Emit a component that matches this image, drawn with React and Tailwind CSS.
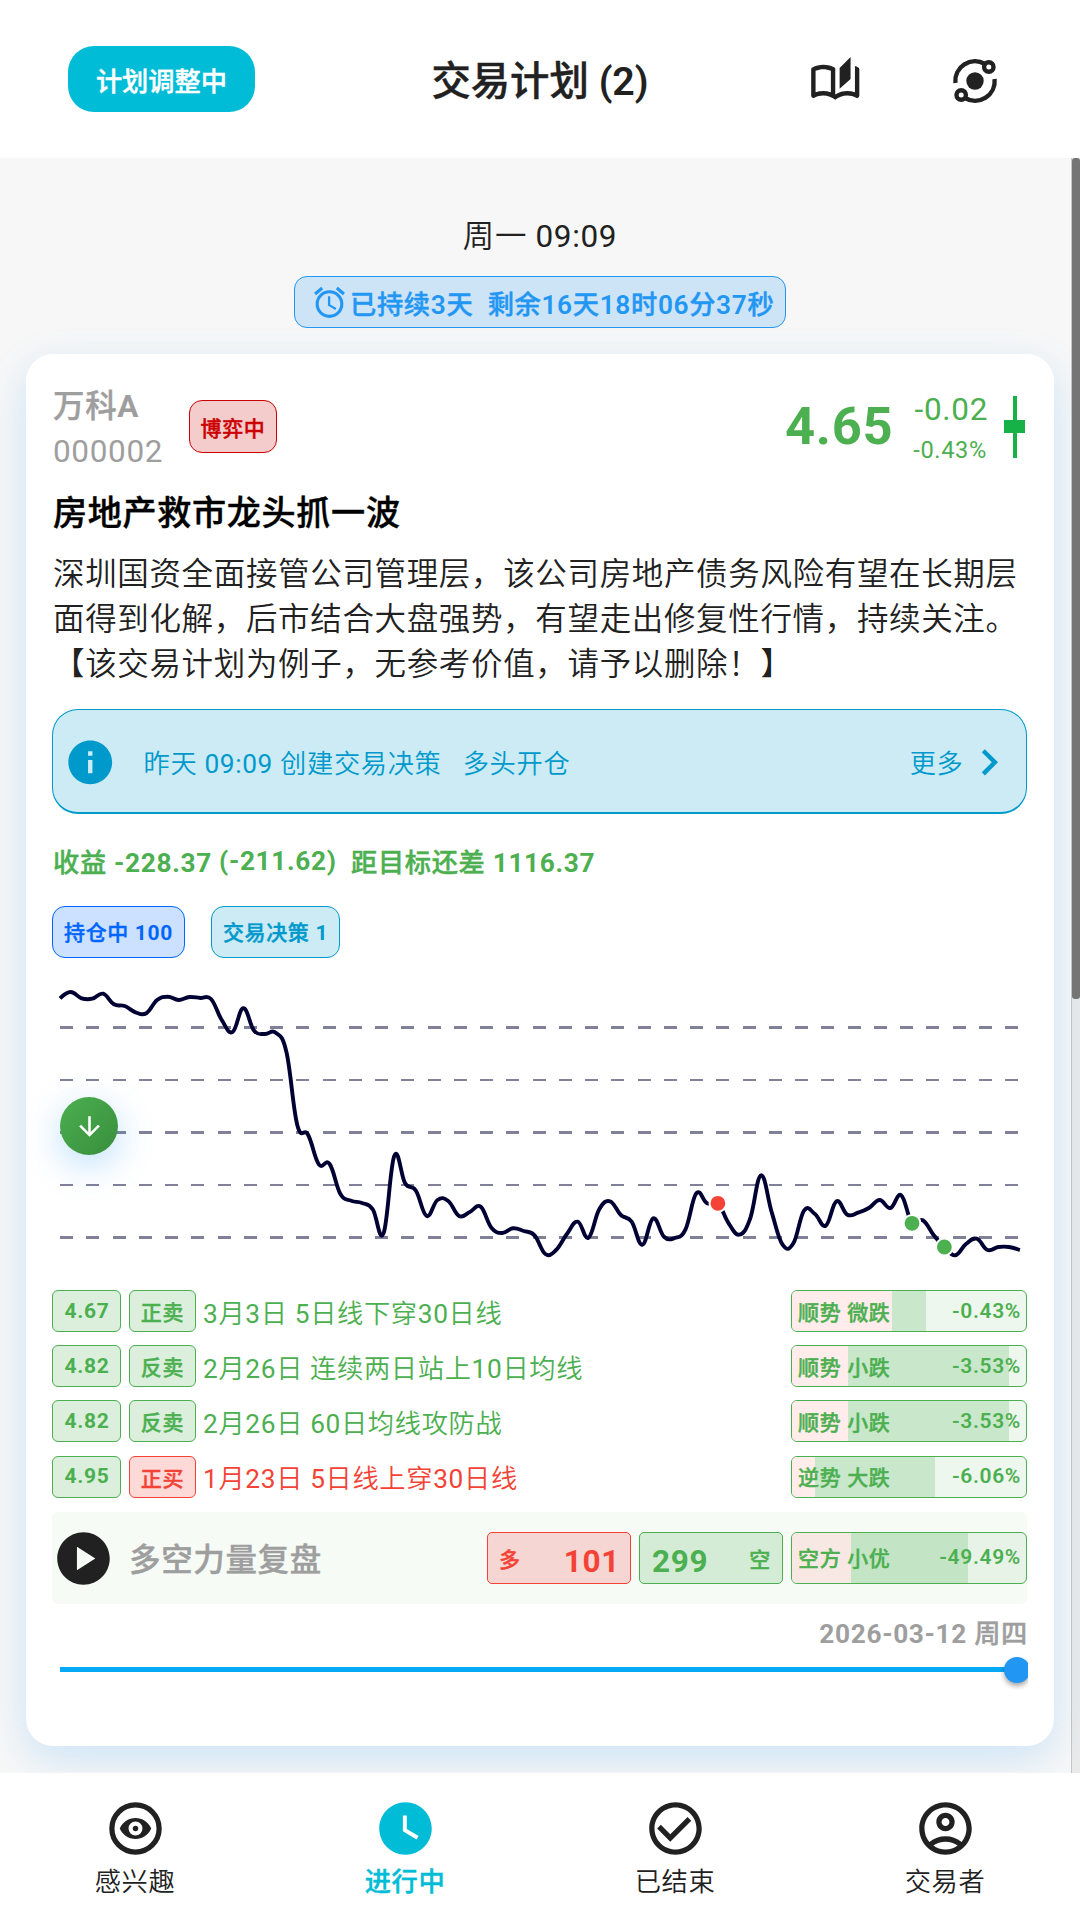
import React from "react";
import {
  MdAccessAlarm,
  MdArrowDownward,
  MdCheckCircleOutline,
  MdChevronRight,
  MdInfo,
  MdOutlineAccountCircle,
  MdOutlineAutoStories,
  MdPlayCircle,
  MdWatchLater,
} from "react-icons/md";

/* Price curve, one value per trading day, in chart units (top = 0). */
const SERIES = [
  28.3, 22, 28.3, 28.7, 23.7, 34.3, 36, 42.3, 43.3, 30, 26.7, 30, 27, 28, 29, 50, 62, 38.3, 60.7, 64, 62.7,
  82.3, 155, 164.7, 194.3, 194, 224, 230.7, 233, 239.3, 263.3, 185.7, 213.3, 220.7, 246, 230, 231, 246, 242,
  236.7, 257.7, 263, 258.3, 261, 265.3, 284, 280, 264, 251.7, 267.7, 239.3, 231.3, 245, 251.7, 274.7, 248.3,
  266.7, 268, 259.3, 223.3, 233.3, 233.3, 253.3, 264.7, 248.3, 205.3, 242.7, 274.7, 273.3, 240.3, 244, 255.7,
  231.3, 244.7, 242.7, 238, 230, 238, 225.3, 253.3, 250.3, 265, 277, 285.3, 274, 268.7, 280, 277, 277, 280,
];
const STEP = 10.785;

function curvePath(values) {
  const pts = values.map((v, i) => [8 + i * STEP, v]);
  let d = `M${pts[0][0]} ${pts[0][1]}`;
  let tx = 0;
  let ty = 0;
  for (let i = 1; i < pts.length; i++) {
    const prev = pts[i - 1];
    const cur = pts[i];
    const next = pts[Math.min(i + 1, pts.length - 1)];
    const c1 = [prev[0] + tx, prev[1] + ty];
    tx = ((next[0] - prev[0]) / 2) * 0.4;
    ty = ((next[1] - prev[1]) / 2) * 0.4;
    d += `C${c1[0]} ${c1[1]} ${cur[0] - tx} ${cur[1] - ty} ${cur[0]} ${cur[1]}`;
  }
  return d;
}

/* Latin and digit runs carry their own weight beside the Chinese text. */
const WEIGHTS = {
  thin: ["font-[350]", "font-normal"],
  semi: ["font-medium [-webkit-text-stroke:0.4px_currentColor]", "font-semibold [-webkit-text-stroke:0px]"],
  bold: ["font-medium [-webkit-text-stroke:0.4px_currentColor]", "font-bold [-webkit-text-stroke:0px]"],
};

function Mixed({ kind, children }) {
  const [cjk, latin] = WEIGHTS[kind];
  return (
    <span className={`whitespace-pre ${cjk}`}>
      {children.split(/([\x21-\x7e]+)/).map((run, i) =>
        i % 2 ? (
          <span key={i} className={latin}>
            {run}
          </span>
        ) : (
          run
        )
      )}
    </span>
  );
}

const MARKS = [
  { i: 61, color: "#f44336" },
  { i: 79, color: "#4caf50" },
  { i: 82, color: "#4caf50" },
];

function Chart() {
  return (
    <div className="relative mt-[12px] h-[310px]">
      <svg width="975" height="310" viewBox="0 0 975 310" fill="none">
        {[57.5, 110, 162.5, 215, 267.5].map((y) => (
          <line
            key={y}
            x1="8"
            x2="967"
            y1={y}
            y2={y}
            stroke="#808099"
            strokeWidth="2.6"
            strokeDasharray="13.125 13.125"
            shapeRendering="crispEdges"
          />
        ))}
        <path d={curvePath(SERIES)} stroke="#000033" strokeWidth="3.9" />
        {MARKS.map((m) => (
          <circle
            key={m.i}
            cx={8 + m.i * STEP}
            cy={SERIES[m.i]}
            r="8.4"
            fill={m.color}
            stroke="#ffffff"
            strokeWidth="2"
          />
        ))}
      </svg>
      <div className="absolute left-[8px] top-[127px] flex h-[58px] w-[58px] items-center justify-center rounded-full bg-linear-135 from-[#4caf50] to-[#388e3c] text-white shadow-[0_10px_36px_rgba(33,150,243,0.3)]">
        <MdArrowDownward size={31} />
      </div>
    </div>
  );
}

function OrbitIcon() {
  return (
    <svg width="52" height="52" viewBox="-26 -26 52 52" fill="none" stroke="#212121" strokeWidth="4.4">
      <circle r="8.7" fill="#212121" stroke="none" />
      <path d="M-19.6 2A19.7 19.7 0 0 1 10 -17" />
      <path d="M19.6 -2A19.7 19.7 0 0 1 -10 17" />
      <circle cx="13.8" cy="-14" r="4.7" />
      <circle cx="-13.8" cy="14" r="4.7" />
    </svg>
  );
}

function EyeCircleIcon() {
  return (
    <svg width="63" height="63" viewBox="0 0 24 24" fill="currentColor">
      <circle cx="12" cy="12" r="9" fill="none" stroke="currentColor" strokeWidth="2" />
      <path
        fillRule="evenodd"
        d="M6 12C7.2 9.4 9.4 8 12 8s4.8 1.4 6 4c-1.2 2.6-3.4 4-6 4s-4.8-1.4-6-4zm6-2.65a2.65 2.65 0 1 0 0 5.3 2.65 2.65 0 0 0 0-5.3z"
      />
      <circle cx="12" cy="12" r="1.05" />
    </svg>
  );
}

function Header() {
  return (
    <header className="grid h-[158px] grid-cols-[1fr_auto_1fr] items-center bg-white text-[#212121]">
      <div className="ml-[68px] flex h-[66px] w-[187px] items-center justify-center rounded-[26px] bg-[#00bcd7] pt-[7px] text-[26.25px] leading-none text-white">
        <Mixed kind="bold">计划调整中</Mixed>
      </div>
      <h1 className="pt-[5px] text-[39.375px] leading-none">
        <Mixed kind="semi">交易计划 (2)</Mixed>
      </h1>
      <div className="flex items-center justify-end gap-[88px] pr-[79px] pt-[3px]">
        <MdOutlineAutoStories size={52.5} className="mt-[4px]" />
        <OrbitIcon />
      </div>
    </header>
  );
}

function StockHead() {
  return (
    <div className="flex h-[90px] items-start">
      <div className="w-[137px] whitespace-nowrap pl-[1px] text-[31.5px] leading-[45px] text-[#9e9e9e]">
        <div>
          <Mixed kind="bold">万科A</Mixed>
        </div>
        <div>000002</div>
      </div>
      <div className="mt-[16px] flex h-[53px] w-[88px] items-center justify-center rounded-[13px] border border-[#cc0000] bg-[#f5cccc] pt-[5px] text-[21px] leading-none text-[#cc0000]">
        <Mixed kind="bold">博弈中</Mixed>
      </div>
      <div className="ml-auto mt-[12px] text-[52.5px] font-bold leading-[60px] text-[#4caf50]">4.65</div>
      <div className="ml-[20px] mt-[4px] text-right text-[#4caf50]">
        <div className="text-[31.5px] leading-[44px]">-0.02</div>
        <div className="pr-[1px] pt-[1px] text-[23.625px] leading-[35px]">-0.43%</div>
      </div>
      <div className="ml-[16px] mr-[2px] mt-[12px] flex h-[62px] w-[21px] flex-col items-center">
        <div className="h-[24px] w-[4px] bg-[#17b247]" />
        <div className="h-[13px] w-[21px] bg-[#17b247]" />
        <div className="h-[25px] w-[4px] bg-[#17b247]" />
      </div>
    </div>
  );
}

function Banner() {
  return (
    <div className="mt-[22px] flex h-[105px] items-center rounded-[26px] border border-b-2 border-[#0099cc] bg-[#ccebf5] pl-[11px] pr-[11px] text-[26.25px] text-[#0099cc]">
      <MdInfo size={52.5} className="mt-[2px]" />
      <div className="ml-[27px] mt-[7px]">
        <Mixed kind="thin">{"昨天 09:09 创建交易决策   多头开仓"}</Mixed>
      </div>
      <div className="-mr-[1px] ml-auto mt-[7px] font-[350]">更多</div>
      <MdChevronRight size={52.5} className="mt-[2px]" />
    </div>
  );
}

/* Two-tone share meter: sell share, buy share and the remainder. */
function Meter({ label, value, first, second, tones, tall }) {
  return (
    <div
      className={`relative ml-[8px] flex w-[236px] shrink-0 overflow-hidden rounded-[6px] border border-[#4caf50] ${
        tall ? "h-[52px]" : "h-full"
      } ${tones[2]}`}
    >
      <div className={tones[0]} style={{ width: first }} />
      <div className={tones[1]} style={{ width: second }} />
      <div className="absolute inset-0 flex items-center justify-between pl-[6px] pr-[5px] text-[21px] leading-none text-[#4caf50]">
        <div className="pt-[4px]">
          <Mixed kind="bold">{label}</Mixed>
        </div>
        <span className="font-semibold">{value}</span>
      </div>
    </div>
  );
}

const PLAIN = ["bg-[#ffeceb]", "bg-[#c9e7cb]", "bg-[#edf7ed]"];
const TINTED = ["bg-[#f7e8e3]", "bg-[#c4e5c5]", "bg-[#e6f3e6]"];

const SIGNALS = [
  { price: "4.67", tag: "正卖", text: "3月3日 5日线下穿30日线", label: "顺势 微跌", value: "-0.43%", first: 100, second: 34 },
  { price: "4.82", tag: "反卖", text: "2月26日 连续两日站上10日均线", label: "顺势 小跌", value: "-3.53%", first: 56, second: 161 },
  { price: "4.82", tag: "反卖", text: "2月26日 60日均线攻防战", label: "顺势 小跌", value: "-3.53%", first: 56, second: 161 },
  { price: "4.95", tag: "正买", text: "1月23日 5日线上穿30日线", label: "逆势 大跌", value: "-6.06%", first: 23, second: 120, buy: true },
];

function SignalRow({ s }) {
  return (
    <div className="flex h-[42px] items-center text-[#4caf50]">
      <div className="flex h-full w-[69px] items-center justify-center rounded-[6px] border border-[#4caf50] bg-[#dbefdc] pl-[1px] text-[21px] font-bold leading-none">
        {s.price}
      </div>
      <div
        className={`ml-[8px] flex h-full w-[67px] items-center justify-center rounded-[6px] border pt-[5px] text-[21px] leading-none ${
          s.buy ? "border-[#f44336] bg-[#fdd9d7] text-[#f44336]" : "border-[#4caf50] bg-[#dbefdc]"
        }`}
      >
        <Mixed kind="bold">{s.tag}</Mixed>
      </div>
      <div className={`ml-[7px] flex-1 pt-[6px] text-[26.25px] leading-none ${s.buy ? "text-[#f44336]" : ""}`}>
        <Mixed kind="thin">{s.text}</Mixed>
      </div>
      <Meter label={s.label} value={s.value} first={s.first} second={s.second} tones={PLAIN} />
    </div>
  );
}

function Review() {
  return (
    <div className="mt-[14px] flex h-[92px] items-center rounded-[6px] bg-[#f6fbf6]">
      <MdPlayCircle size={63} className="mt-[1px] text-[#212121]" />
      <div className="ml-[14px] flex-1 pt-[7px] text-[31.5px] leading-none text-[#9e9e9e]">
        <Mixed kind="bold">多空力量复盘</Mixed>
      </div>
      <div className="flex h-[52px] w-[144px] items-center justify-between rounded-[5px] border border-[#f44336] bg-[#f6d6d2] pl-[11px] pr-[10px] leading-none text-[#f44336]">
        <div className="pt-[5px] text-[21px]">
          <Mixed kind="bold">多</Mixed>
        </div>
        <span className="pt-[8px] text-[31.5px] font-bold">101</span>
      </div>
      <div className="ml-[8px] flex h-[52px] w-[144px] items-center justify-between rounded-[5px] border border-[#4caf50] bg-[#d4ecd5] pl-[12px] pr-[11px] leading-none text-[#4caf50]">
        <span className="pt-[8px] text-[31.5px] font-bold">299</span>
        <div className="pt-[5px] text-[21px]">
          <Mixed kind="bold">空</Mixed>
        </div>
      </div>
      <Meter label="空方 小优" value="-49.49%" first={59} second={117} tones={TINTED} tall />
    </div>
  );
}

function Slider() {
  return (
    <div className="-mr-[1px] flex h-[40px] items-center overflow-hidden">
      <div className="ml-[8px] h-[5px] flex-1 bg-[#03a9f4]" />
      <div className="-mr-[2px] -ml-[8px] h-[26px] w-[26px] shrink-0 rounded-full bg-[#2196f3] shadow-[0_3px_5px_rgba(0,0,0,0.35)]" />
    </div>
  );
}

function PlanCard() {
  return (
    <section className="mx-[26px] mt-[26px] h-[1392px] rounded-[27px] bg-white pl-[26px] pr-[27px] pt-[30px] shadow-[0_13px_40px_rgba(33,150,243,0.2)]">
      <StockHead />
      <h2 className="mt-[15px] pl-[1px] text-[34.125px] leading-[48px] text-black">
        <Mixed kind="bold">房地产救市龙头抓一波</Mixed>
      </h2>
      <p className="mt-[15px] whitespace-pre pl-[1px] text-[31.5px] font-[350] leading-[45px] text-[#212121] [text-spacing-trim:space-all]">
        {"深圳国资全面接管公司管理层，该公司房地产债务风险有望在长期层\n面得到化解，后市结合大盘强势，有望走出修复性行情，持续关注。\n【该交易计划为例子，无参考价值，请予以删除！】"}
      </p>
      <Banner />
      <div className="mt-[29px] flex h-[40px] items-center whitespace-pre pl-[1px] text-[26.25px] leading-[40px] text-[#4caf50]">
        <Mixed kind="bold">{"收益 -228.37 "}</Mixed>
        <span className="pb-[4px] font-bold">(-211.62)</span>
        <Mixed kind="bold">{"  距目标还差 1116.37"}</Mixed>
      </div>
      <div className="mt-[23px] flex h-[52px] gap-[26px] text-[21px] leading-none">
        <div className="flex w-[133px] items-center justify-center rounded-[13px] border border-[#0066ff] bg-[#cce0ff] pt-[3px] text-[#0066ff]">
          <Mixed kind="bold">持仓中 100</Mixed>
        </div>
        <div className="flex w-[129px] items-center justify-center rounded-[13px] border border-[#0099cc] bg-[#ccebf5] pt-[3px] text-[#0099cc]">
          <Mixed kind="bold">交易决策 1</Mixed>
        </div>
      </div>
      <Chart />
      <div className="mt-[10px] flex flex-col gap-[13.2px]">
        {SIGNALS.map((s, i) => (
          <SignalRow key={i} s={s} />
        ))}
      </div>
      <Review />
      <div className="-mr-[1px] mt-[10px] text-right text-[26.25px] leading-[40px] text-[#9e9e9e]">
        <Mixed kind="bold">2026-03-12 周四</Mixed>
      </div>
      <div className="-mt-[4px]">
        <Slider />
      </div>
    </section>
  );
}

const TABS = [
  { label: "感兴趣", icon: <EyeCircleIcon /> },
  { label: "进行中", icon: <MdWatchLater size={63} />, active: true },
  { label: "已结束", icon: <MdCheckCircleOutline size={63} /> },
  { label: "交易者", icon: <MdOutlineAccountCircle size={63} /> },
];

export default function App() {
  return (
    <div className="flex h-[1920px] w-[1080px] flex-col overflow-hidden bg-[#f7f7f7] font-['Roboto','Noto_Sans_CJK_SC',sans-serif]">
      <Header />
      <main className="relative h-[1615px] overflow-hidden tracking-[0.656px]">
        <div className="mt-[56px] h-[45px] text-center text-[31.5px] leading-[45px] text-[#212121]">
          <Mixed kind="thin">周一 09:09</Mixed>
        </div>
        <div className="mx-auto mt-[17px] flex h-[52px] w-[492px] items-center rounded-[13px] border border-[#2196f3] bg-[#cde3f6] pl-[16px] text-[26.25px] leading-none text-[#2196f3]">
          <MdAccessAlarm size={37} />
          <div className="ml-[2px] pt-[6px]">
            <Mixed kind="semi">{"已持续3天  剩余16天18时06分37秒"}</Mixed>
          </div>
        </div>
        <PlanCard />
        <div className="absolute right-0 top-0 h-full w-[9px] border-l border-black/15 bg-black/5">
          <div className="h-[841px] w-[8px] rounded-[3px] bg-[#757575]" />
        </div>
      </main>
      <nav className="grid flex-1 grid-cols-4 bg-white tracking-[0.656px] text-[#212121]">
        {TABS.map((t) => (
          <div key={t.label} className={`flex flex-col items-center pt-[24px] ${t.active ? "text-[#00bcd7]" : ""}`}>
            {t.icon}
            <div className="mt-[2px] text-[26.25px] leading-[40px]">
              <Mixed kind={t.active ? "bold" : "thin"}>{t.label}</Mixed>
            </div>
          </div>
        ))}
      </nav>
    </div>
  );
}
